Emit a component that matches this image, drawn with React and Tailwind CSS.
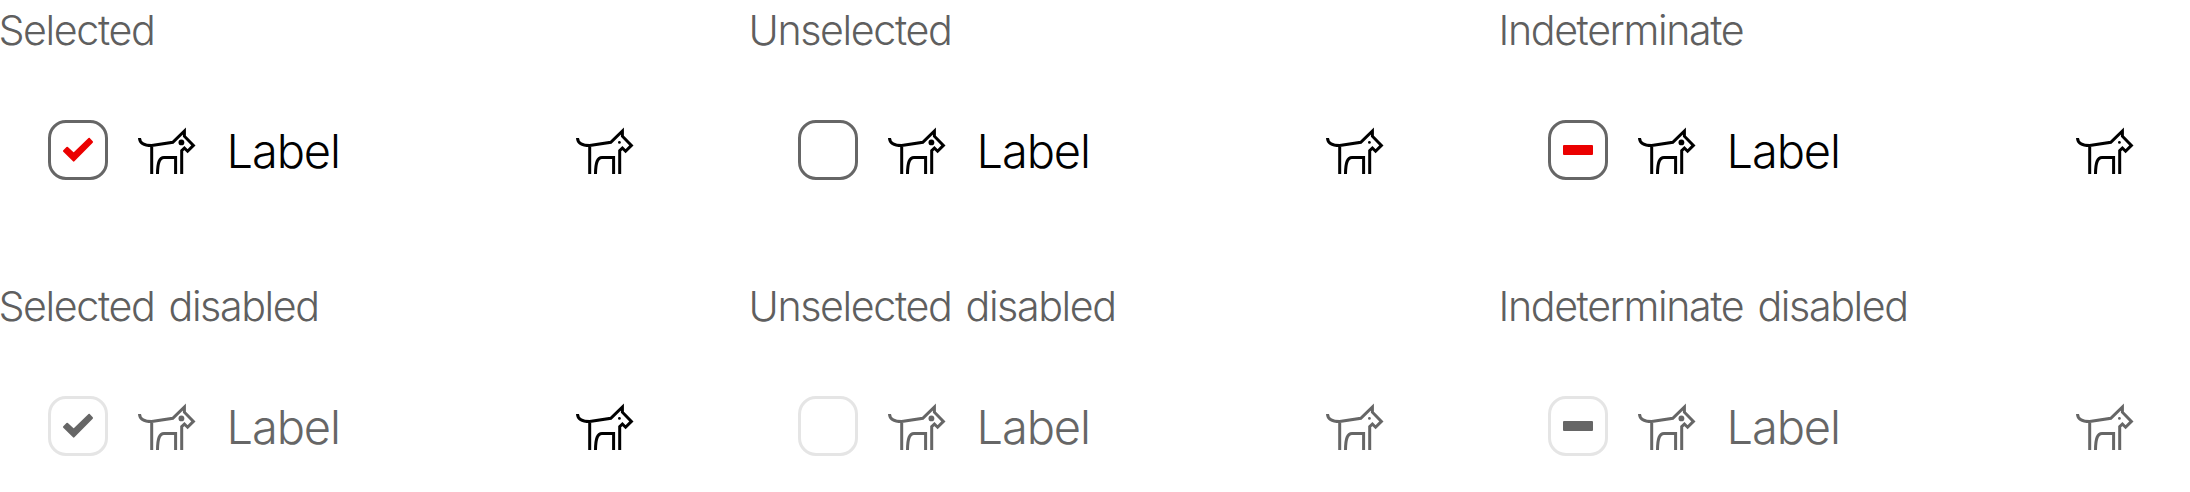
import React from "react";

const dogBody =
  "M7.5 18C7.7 23 12 25.6 19.7 25.6L40.8 22.3L52.4 11V16.2L61.4 25.4L55.6 31.2L52.4 28L49.7 30.6V54M19.7 25.6V54M25.5 54C25.6 42 27.5 37.5 32 37.5H43.6V54";

function Dog({ eye }) {
  return (
    <svg width="66" height="60" viewBox="0 0 66 60" fill="none" className="shrink-0" aria-hidden="true">
      <path d={dogBody} stroke="currentColor" strokeWidth="3" strokeMiterlimit="10" />
      <circle cx="49.4" cy="22.4" r={eye} fill="currentColor" />
    </svg>
  );
}

function Mark({ state }) {
  return (
    <svg width="60" height="60" viewBox="0 0 60 60" className="shrink-0" aria-hidden="true">
      {state === "selected" && (
        <path
          d="M16 31L19.2 27.8L25.7 33.7L41.2 18.8L44 22L25.7 40.6Z"
          fill="currentColor"
          stroke="currentColor"
          strokeWidth="2"
          strokeLinejoin="round"
        />
      )}
      {state === "indeterminate" && <rect x="15" y="25" width="30" height="10" rx="1" fill="currentColor" />}
    </svg>
  );
}

function Checkbox({ title, state, disabled, endMuted }) {
  return (
    <section className="flex h-[276px] w-[750px] flex-col">
      <h2 className="-ml-[1.5px] h-[60px] whitespace-nowrap text-[41.2px] leading-[60px] font-light tracking-[-1.4px] [word-spacing:4px] text-[#5f5f5f]">
        {title}
      </h2>
      <div className={`mt-[60px] flex h-[60px] items-center pl-12 ${disabled ? "text-[#666666]" : "text-black"}`}>
        <div
          role="checkbox"
          aria-checked={state === "indeterminate" ? "mixed" : state === "selected"}
          aria-disabled={disabled}
          className={`flex size-[60px] shrink-0 items-center justify-center rounded-[18px] border-3 ${
            disabled ? "border-[#e5e5e5] text-[#666666]" : "border-[#666666] text-[#eb0000]"
          }`}
        >
          <Mark state={state} />
        </div>
        <div className="ml-6 flex">
          <Dog eye={2.9} />
        </div>
        <span className="ml-[28.5px] w-[343.5px] pt-[2px] text-[47px] leading-[60px] font-light tracking-[-1.1px]">
          Label
        </span>
        <div className={endMuted ? "text-[#666666]" : "text-black"}>
          <Dog eye={1.4} />
        </div>
      </div>
    </section>
  );
}

export default function App() {
  return (
    <main className="grid h-[492px] w-[2190px] grid-cols-[750px_750px_690px] grid-rows-[276px_216px] overflow-hidden bg-white font-['Inter','Liberation_Sans',sans-serif]">
      <Checkbox title="Selected" state="selected" />
      <Checkbox title="Unselected" state="unselected" />
      <Checkbox title="Indeterminate" state="indeterminate" />
      <Checkbox title="Selected disabled" state="selected" disabled />
      <Checkbox title="Unselected disabled" state="unselected" disabled endMuted />
      <Checkbox title="Indeterminate disabled" state="indeterminate" disabled endMuted />
    </main>
  );
}
